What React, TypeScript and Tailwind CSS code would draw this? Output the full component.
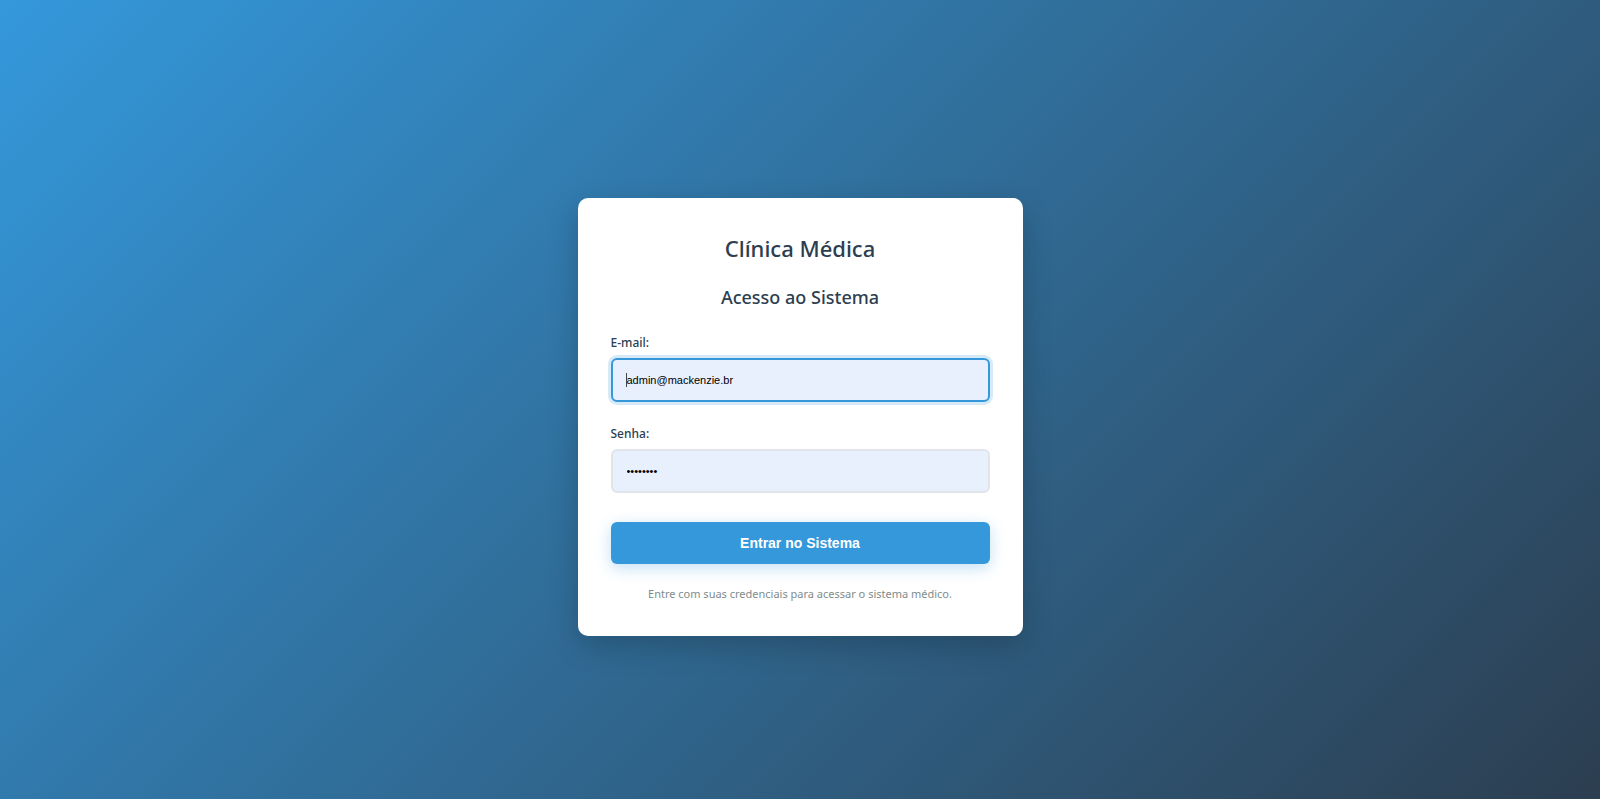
export default function App() {
  return (
    <main className="flex min-h-screen items-center justify-center bg-[linear-gradient(135deg,#3498db_0%,#2c3e50_100%)] px-5 pt-[55px] pb-5 font-['Noto_Sans',sans-serif] text-[#2c3e50]">
      <section className="w-full max-w-[445px] rounded-[10px] bg-white px-[33px] pt-[34px] pb-8 shadow-[0_10px_30px_rgba(0,0,0,0.2)]">
        <h1 className="text-center text-[22px] leading-8 font-medium">Clínica Médica</h1>
        <h2 className="mt-[21px] text-center text-[18px] leading-6 font-medium">Acesso ao Sistema</h2>
        <form className="mt-6" onSubmit={(e) => e.preventDefault()}>
          <label htmlFor="email" className="block text-[12px] leading-5 font-medium">E-mail:</label>
          <div className="relative mt-[5px]">
            <input
              id="email"
              type="email"
              autoFocus
              defaultValue="admin@mackenzie.br"
              className="peer block h-11 w-full rounded-md border-2 border-[#e1e5ea] bg-[#e8f0fe] px-[14px] font-['Liberation_Sans',sans-serif] text-[11px] text-black caret-transparent outline-none focus:border-[#3498db] focus:shadow-[0_0_0_3px_rgba(52,152,219,0.2)]"
            />
            <span aria-hidden="true" className="pointer-events-none absolute inset-y-0 left-[15px] my-auto hidden h-[14px] w-px bg-[#444] peer-focus:block" />
          </div>
          <label htmlFor="senha" className="mt-[22px] block text-[12px] leading-5 font-medium">Senha:</label>
          <input
            id="senha"
            type="password"
            defaultValue="admin123"
            className="mt-[5px] block h-11 w-full rounded-md border-2 border-[#e1e5ea] bg-[#e8f0fe] px-[14px] font-['Liberation_Sans',sans-serif] text-[11px] text-black outline-none focus:border-[#3498db] focus:shadow-[0_0_0_3px_rgba(52,152,219,0.2)]"
          />
          <button
            type="submit"
            className="mt-[29px] block h-[42px] w-full rounded-md bg-[#3498db] font-['Liberation_Sans',sans-serif] text-[14px] font-bold text-white shadow-[0_4px_15px_rgba(52,152,219,0.3)]"
          >
            Entrar no Sistema
          </button>
        </form>
        <p className="mt-5 text-center text-[11px] leading-5 text-[#7f8c8d]">Entre com suas credenciais para acessar o sistema médico.</p>
      </section>
    </main>
  );
}
